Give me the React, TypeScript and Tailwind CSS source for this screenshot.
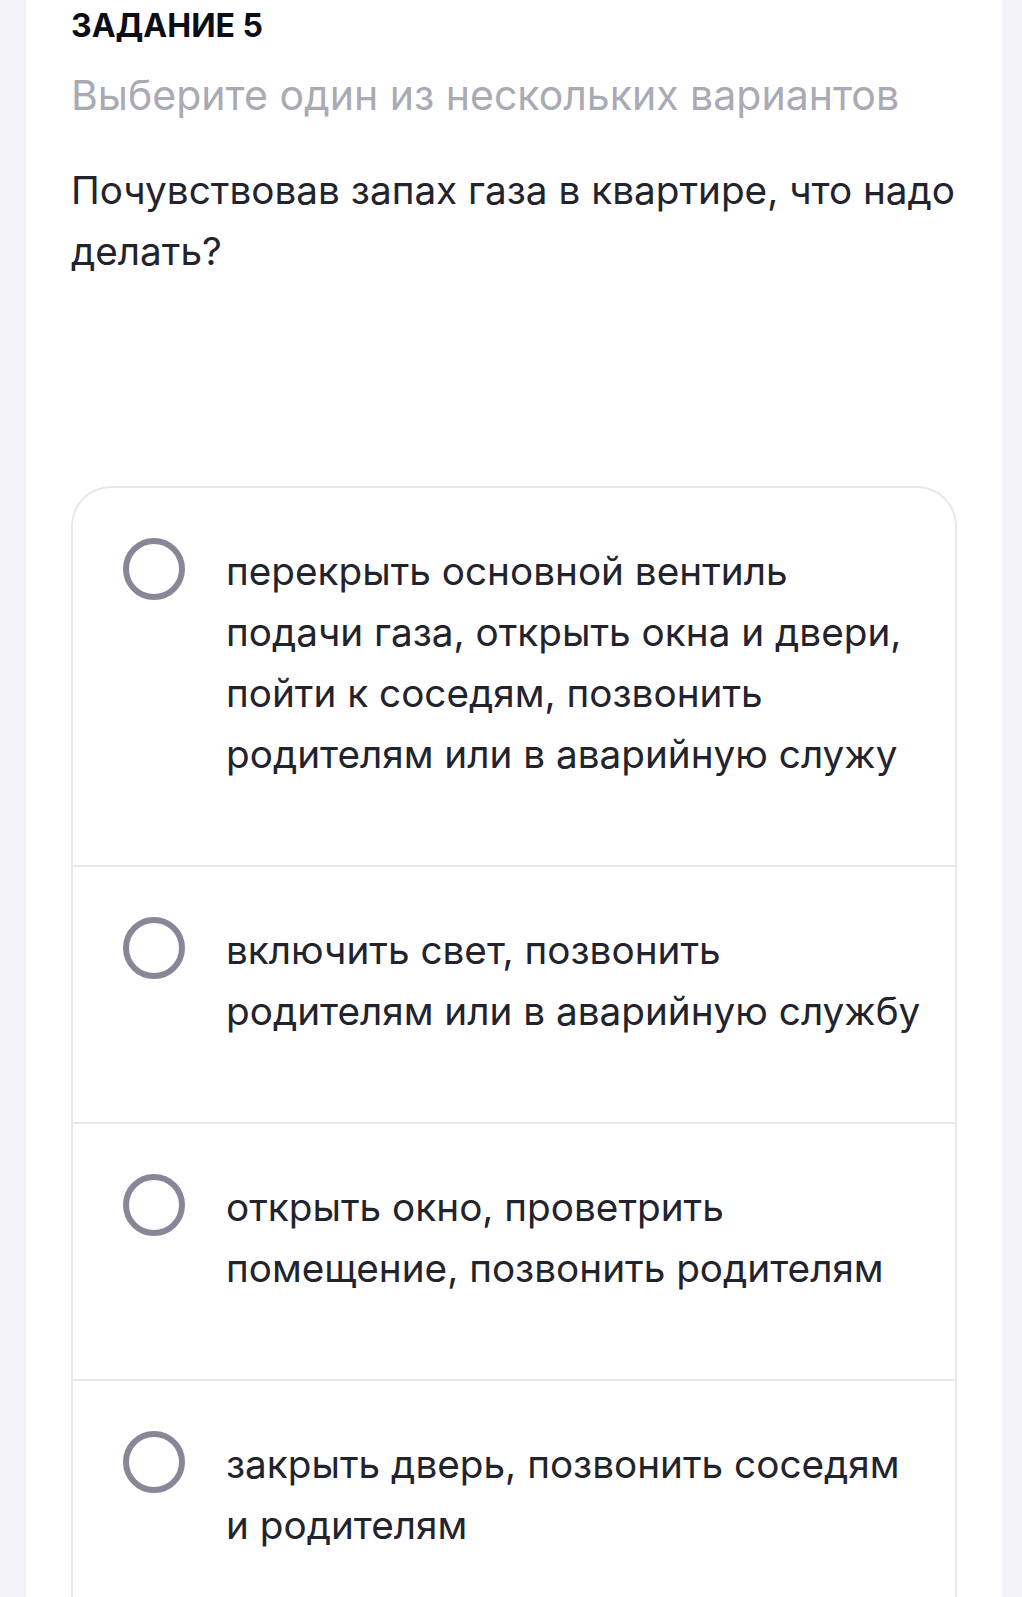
import React from 'react';

const options: string[][] = [
  ['перекрыть основной вентиль', 'подачи газа, открыть окна и двери,', 'пойти к соседям, позвонить', 'родителям или в аварийную служу'],
  ['включить свет, позвонить', 'родителям или в аварийную службу'],
  ['открыть окно, проветрить', 'помещение, позвонить родителям'],
  ['закрыть дверь, позвонить соседям', 'и родителям'],
];

function Option({ lines, last }: { lines: string[]; last: boolean }) {
  return (
    <div className={`flex items-start pl-[50px] pr-[30px] pt-[53px] pb-[80px] ${last ? '' : 'border-b-2 border-[#e8e8eb]'}`}>
      <div className="mt-[-3px] w-[62px] h-[62px] shrink-0 rounded-full border-[6px] border-[#878797] bg-white" />
      <div className="ml-[41px] text-[38.7px] leading-[61px] text-[#23232e] whitespace-nowrap">
        {lines.map((l, i) => (
          <div key={i}>{l}</div>
        ))}
      </div>
    </div>
  );
}

export default function App() {
  return (
    <div className="h-[1597px] overflow-hidden bg-[#f2f2f7] pl-[26px] pr-[20px] font-['Inter','Noto_Sans',sans-serif]">
      <div className="h-full bg-white px-[45px] pt-[8px]">
        <h1 className="text-[32px] leading-[36px] font-bold text-[#0d0d17]">ЗАДАНИЕ 5</h1>
        <p className="mt-[28px] text-[41px] leading-[46px] text-[#aaaab4] whitespace-nowrap">Выберите один из нескольких вариантов</p>
        <p className="mt-[42px] text-[38.7px] leading-[61px] text-[#23232e] whitespace-nowrap">
          Почувствовав запах газа в квартире, что надо
          <br />
          делать?
        </p>

        {/* варианты ответа */}
        <div className="mt-[204px] rounded-t-[40px] border-2 border-b-0 border-[#e8e8eb]">
          {options.map((o, i) => (
            <Option key={i} lines={o} last={i === options.length - 1} />
          ))}
        </div>
      </div>
    </div>
  );
}
